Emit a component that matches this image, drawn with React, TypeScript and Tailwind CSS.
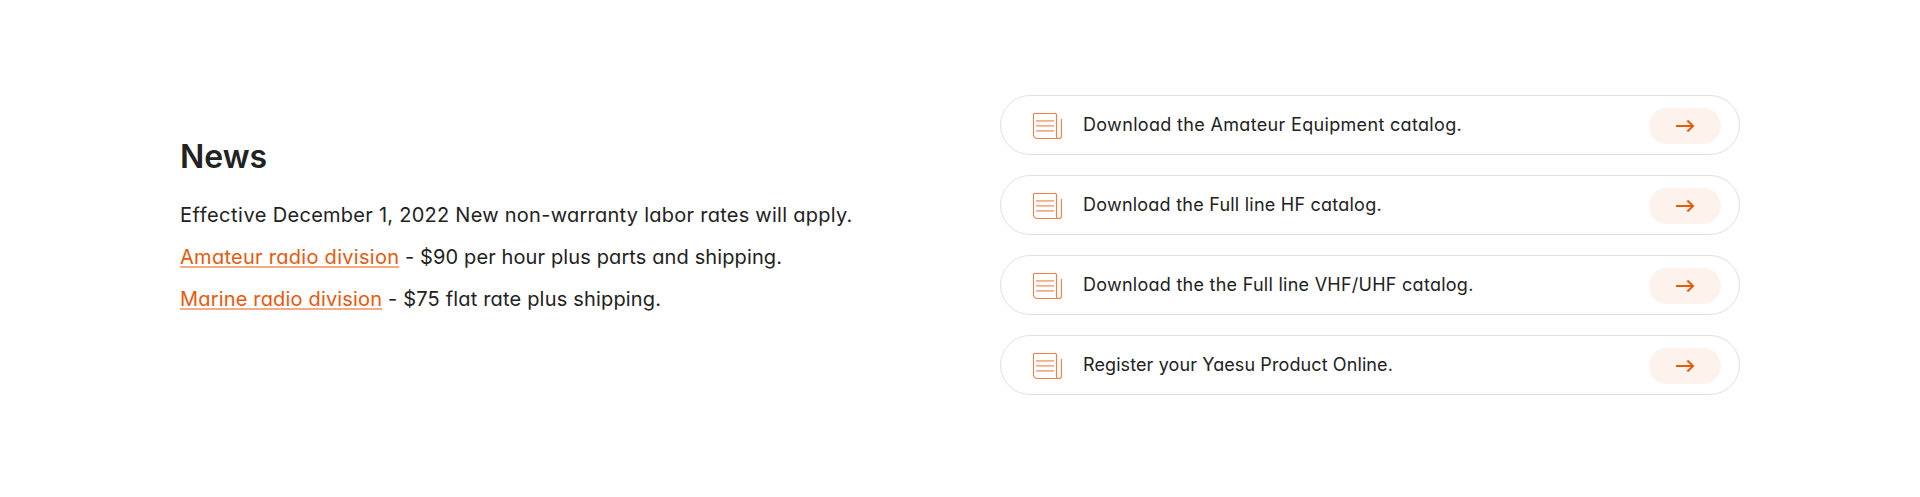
const downloads = [
  { label: "Download the Amateur Equipment catalog.", tracking: "tracking-[0.33px]" },
  { label: "Download the Full line HF catalog.", tracking: "tracking-[0.23px]" },
  { label: "Download the the Full line VHF/UHF catalog.", tracking: "tracking-[0.26px]" },
  { label: "Register your Yaesu Product Online.", tracking: "tracking-[0.1px]" },
];

function DocumentIcon() {
  return (
    <svg width="29" height="26" viewBox="0 0 29 26" fill="none" className="shrink-0">
      <path
        d="M23.5 22V2A1.5 1.5 0 0 0 22 .5H2A1.5 1.5 0 0 0 .5 2V21.5A4 4 0 0 0 4.5 25.5H26A2.5 2.5 0 0 0 28.5 23V6M23.5 22V23.5A2 2 0 0 0 25.5 25.5"
        stroke="#ed8146"
        strokeWidth="1.2"
      />
      <path d="M3 7.8H21M3 12.9H21M3 17.9H21" stroke="#f3ae89" strokeWidth="1.7" />
    </svg>
  );
}

function ArrowIcon() {
  return (
    <svg width="18" height="12" viewBox="0 0 18 12" fill="none" stroke="#e8590c" strokeWidth="2">
      <path d="M0 6H17M11.4 .6L17 6L11.4 11.4" />
    </svg>
  );
}

const linkClass =
  "text-[#e8590c] underline decoration-[#f3ac84] decoration-2 underline-offset-2 [text-decoration-skip-ink:none]";

export default function App() {
  return (
    <main className="flex h-[497px] w-[1920px] bg-white pl-[180px] font-['Inter',sans-serif] text-[#222222] [font-feature-settings:'cv11']">
      <section className="w-[820px] pt-[137px]">
        <h2 className="mb-[17px] text-[32px] leading-10 font-semibold">News</h2>
        <div className="text-[20px] leading-[42px] whitespace-nowrap">
          <p>
            <span className="tracking-[0.5px]">Effective</span>
            <span className="tracking-[0.26px]"> December 1, 2022 New non-warranty labor rates will apply.</span>
          </p>
          <p>
            <a href="#" className={linkClass + " tracking-[0.28px]"}>Amateur radio division</a>
            <span className="tracking-[0.12px]"> - $90 per hour plus parts and shipping.</span>
          </p>
          <p>
            <a href="#" className={linkClass + " tracking-[0.17px]"}>Marine radio division</a>
            <span className="tracking-[0.18px]"> - $75 flat rate plus shipping.</span>
          </p>
        </div>
      </section>
      <ul className="flex w-[740px] flex-col gap-5 pt-[95px]">
        {downloads.map((item) => (
          <li key={item.label}>
            <a
              href="#"
              className="flex h-[60px] items-center rounded-full border border-[#ebded8] pt-[2px] pr-[18px] pl-8"
            >
              <DocumentIcon />
              <span className={"mb-1 ml-[21px] flex-1 text-[18px] " + item.tracking}>{item.label}</span>
              <span className="flex h-9 w-[72px] items-center justify-center rounded-full bg-[#fdf2ec]">
                <ArrowIcon />
              </span>
            </a>
          </li>
        ))}
      </ul>
    </main>
  );
}
